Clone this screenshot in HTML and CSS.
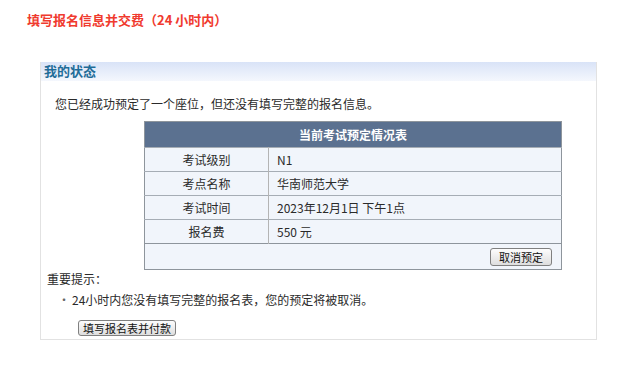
FILE: index.html
```html
<!DOCTYPE html>
<html lang="zh-CN">
<head>
    <meta charset="UTF-8">
    <title>填写报名信息并交费</title>
    <link rel="stylesheet" href="styles.css">
</head>
<body>
<h3 class="page-title">填写报名信息并交费（24 小时内）</h3>

<div class="panel">
    <div class="panel-head">我的状态</div>
    <div class="panel-body">
        <p class="intro">您已经成功预定了一个座位，但还没有填写完整的报名信息。</p>

        <table class="booking">
            <tr><th colspan="2">当前考试预定情况表</th></tr>
            <tr><td class="label">考试级别</td><td>N1</td></tr>
            <tr><td class="label">考点名称</td><td>华南师范大学</td></tr>
            <tr><td class="label">考试时间</td><td>2023年12月1日 下午1点</td></tr>
            <tr><td class="label">报名费</td><td>550 元</td></tr>
            <tr><td colspan="2" class="actions"><button class="btn">取消预定</button></td></tr>
        </table>

        <div class="notice-title">重要提示：</div>
        <ul class="notice">
            <li>24小时内您没有填写完整的报名表，您的预定将被取消。</li>
        </ul>
        <button class="btn btn-pay">填写报名表并付款</button>
    </div>
</div>
</body>
</html>
```

FILE: styles.css
```css
body {
    margin: 0;
    background: #fff;
    font-family: "Noto Sans CJK SC", "Liberation Sans", sans-serif;
    font-size: 12px;
    color: #2a2a2a;
}
.page-title {
    margin: 11px 0 0 27px;
    font-size: 13px;
    line-height: 18px;
    font-weight: bold;
    color: #f03a2e;
}
.panel {
    margin: 33px 0 0 40px;
    width: 555px;
    border: 1px solid #e2e2e2;
    border-top: none;
}
.panel-head {
    height: 19px;
    line-height: 17px;
    padding-left: 3px;
    font-size: 13px;
    font-weight: bold;
    color: #1f6c98;
    background: linear-gradient(#d9e3f7, #f4f7fd);
}
.panel-body {
    padding: 0 0 3px 0;
}
.intro {
    margin: 14px 0 8px 14px;
    line-height: 18px;
}
.booking {
    margin-left: 103px;
    width: 418px;
    border-collapse: collapse;
    border: 1px solid #8e959c;
    line-height: 16px;
}
.booking th {
    height: 25px;
    padding: 0;
    background: #5b7190;
    color: #fff;
    font-size: 12px;
    font-weight: bold;
}
.booking td {
    height: 23px;
    padding: 0 0 0 8px;
    background: #f1f5fb;
    border-top: 1px solid #a6adb5;
}
.booking td.label {
    width: 123px;
    padding: 0;
    text-align: center;
    border-right: 1px solid #b4b4b4;
}
.booking td.actions {
    height: 25px;
    padding: 0 9px 0 0;
    text-align: right;
    border-top: 1px solid #8e959c;
}
.btn {
    height: 18px;
    padding: 0 8px;
    font-family: inherit;
    font-size: 11px;
    line-height: 16px;
    color: #111;
    border: 1px solid #808080;
    border-radius: 3px;
    background: linear-gradient(#fdfdfd, #dedede);
    vertical-align: middle;
}
.notice-title {
    margin: 0 0 0 6px;
    line-height: 18px;
}
.notice {
    margin: 3px 0 0 0;
    padding-left: 31px;
    line-height: 18px;
    list-style: none;
}
.notice li::before {
    content: "•";
    display: inline-block;
    width: 14px;
    margin-left: -14px;
    color: #666;
}
.btn-pay {
    display: block;
    height: 16px;
    line-height: 14px;
    margin: 11px 0 0 37px;
    padding: 0 4px;
}
```
